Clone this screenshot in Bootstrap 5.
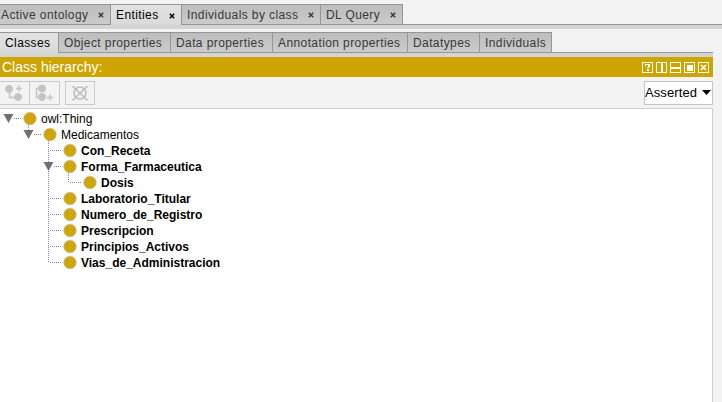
<!DOCTYPE html>
<html lang="en">
<head>
<meta charset="utf-8">
<title>Class hierarchy</title>
<link href="https://cdn.jsdelivr.net/npm/bootstrap@5.3.0/dist/css/bootstrap.min.css" rel="stylesheet">
<style>
body{font:12px/16px "Liberation Sans",Arial,sans-serif;background:#f3f3f3;color:#000;height:402px;overflow:hidden}
.tabbar{height:21px;border-bottom:1px solid #969696}
.tabbar .nav-link{height:21px;padding:0 0 0 5px;border:0 solid #969696;border-width:1px 1px 1px 0;border-radius:0;background:linear-gradient(#bdbdbd,#cbcbcb);color:#383838;font-size:12px;line-height:20px;letter-spacing:.4px;white-space:nowrap}
.tabbar .nav-link.active{background:linear-gradient(#e2e2e2,#dadada);color:#000;border-bottom:0}
.tabbar .nav-link svg{width:6px;height:6px;margin-top:1px}
.tabbar .closable{display:flex;align-items:center;justify-content:space-between;padding-right:6px}
.tabbar .first-tab{padding-left:1px}
.strip{height:4px;background:#d4d4d4}
.pane{width:713px;padding-top:3px}
.pane-head{height:20px;background:#cea500;color:#fff;font-size:14px;line-height:20px;padding-left:2px}
.tools{height:31px}
.tool{width:30px;height:24px;border:1px solid #c9c9c9;border-radius:0;background:#f3f3f3}
.tool-del{margin-left:5px}
.mode{width:69px;height:24px;border:1px solid #c5c5c5;border-radius:0;background:#fff;color:#000;font-size:13px;line-height:20px;letter-spacing:.1px}
.mode svg{margin-right:1px}
.tree{height:294px;background:#fff;border:solid #cfcfcf;border-width:1px 1px 0 0}
.tree-labels{padding-top:2px}
.tree-labels li{height:16px;line-height:16px}
.l0{padding-left:41px}.l1{padding-left:61px}.l2{padding-left:81px}.l3{padding-left:101px}
.w-a{width:111px}.w-b{width:71px}.w-c{width:139px}.w-d{width:82px}
.v-a{width:59px}.v-b{width:112px}.v-c{width:102px}.v-d{width:135px}.v-e{width:72px}.v-f{width:72px}
</style>
<script src="https://cdn.jsdelivr.net/npm/bootstrap@5.3.0/dist/js/bootstrap.bundle.min.js"></script>
</head>
<body>
<svg width="0" height="0" class="d-none"><symbol id="x" viewBox="0 0 6 6"><path d="M.8.8 5.2 5.2M5.2.8.8 5.2" stroke="currentColor" stroke-width="1.4"/></symbol></svg>
<nav class="tabbar nav flex-nowrap mt-1">
  <a class="nav-link closable first-tab w-a"><span>Active ontology</span><svg><use href="#x"/></svg></a>
  <a class="nav-link closable active w-b"><span>Entities</span><svg><use href="#x"/></svg></a>
  <a class="nav-link closable w-c"><span>Individuals by class</span><svg><use href="#x"/></svg></a>
  <a class="nav-link closable w-d"><span>DL Query</span><svg><use href="#x"/></svg></a>
</nav>
<div class="strip"></div>
<main class="pane">
  <nav class="tabbar nav flex-nowrap">
    <a class="nav-link active v-a">Classes</a>
    <a class="nav-link v-b">Object properties</a>
    <a class="nav-link v-c">Data properties</a>
    <a class="nav-link v-d">Annotation properties</a>
    <a class="nav-link v-e">Datatypes</a>
    <a class="nav-link v-f">Individuals</a>
  </nav>
  <div class="strip"></div>
  <header class="pane-head d-flex justify-content-between align-items-center">
    <span>Class hierarchy:</span>
    <svg width="71" height="20" fill="none" stroke="#fff" shape-rendering="crispEdges">
      <path d="M.5 5.5h10v10H.5zM14.5 5.5h10v10h-10zM28.5 5.5h10v10h-10zM42.5 5.5h10v10h-10zM56.5 5.5h10v10h-10z"/>
      <path d="M20 6v9M29 11h9" stroke-width="2"/>
      <path d="M45 8h5v5h-5z" fill="#fff"/>
      <path d="M59 8l5 5m0-5-5 5" stroke-width="1.600" shape-rendering="auto"/>
      <path d="M3 7h5v1H3zM3 8h1v1H3zM6 8h2v2H6zM5 10h2v1H5zM5 12h2v2H5z" fill="#fff" stroke="none"/>
    </svg>
  </header>
  <div class="tools d-flex align-items-center justify-content-between">
    <div class="d-flex">
      <button class="tool btn p-0 d-flex border-start-0" aria-label="Add subclass"><svg width="28" height="22" fill="#c4c4c4" stroke="#c4c4c4"><circle cx="9" cy="7" r="3.500"/><circle cx="18" cy="15" r="3.500"/><path d="M9.500 10v5.500H15M16 6.500h6M19 3.500v6" fill="none" stroke-width="1.500"/></svg></button>
      <button class="tool btn p-0 d-flex border-start-0" aria-label="Add sibling class"><svg width="28" height="22" fill="#c4c4c4" stroke="#c4c4c4"><circle cx="12" cy="6.500" r="3.500"/><circle cx="12" cy="15" r="3.500"/><path d="M9 6.500H6.500v9H9M17 15.500h6M20 12.500v6" fill="none" stroke-width="1.500"/></svg></button>
      <button class="tool tool-del btn p-0 d-flex" aria-label="Delete class"><svg width="28" height="22" fill="none" stroke="#bdbdbd" stroke-width="1.600"><circle cx="14" cy="11" r="6"/><path d="M6.500 4l15 14.500M21.500 4l-15 14.500"/></svg></button>
    </div>
    <button class="mode btn p-0 d-flex align-items-center"><span>Asserted</span><svg class="ms-auto" width="9" height="5"><path d="M0 0h9L4.500 5z"/></svg></button>
  </div>
  <section class="tree position-relative">
    <svg class="position-absolute top-0 start-0" width="120" height="170">
      <g fill="none" stroke="#888" stroke-dasharray="1 1" shape-rendering="crispEdges">
        <path d="M14 9.500h7M34 25.500h7M28.500 16v5M48.500 32v122M50 41.500h11M54 57.500h7M68.500 64v10M70 73.500h11M50 89.500h11M50 105.500h11M50 121.500h11M50 137.500h11M50 153.500h11"/>
      </g>
      <g fill="#707070"><path d="M3.500 5h10l-5 9zM23.500 21h10l-5 9zM43.500 53h10l-5 9z"/></g>
      <g fill="#cea50b" stroke="#cfc49b" stroke-width=".8"><circle cx="30" cy="9.500" r="6.300"/><circle cx="50" cy="25.500" r="6.300"/><circle cx="70" cy="41.500" r="6.300"/><circle cx="70" cy="57.500" r="6.300"/><circle cx="90" cy="73.500" r="6.300"/><circle cx="70" cy="89.500" r="6.300"/><circle cx="70" cy="105.500" r="6.300"/><circle cx="70" cy="121.500" r="6.300"/><circle cx="70" cy="137.500" r="6.300"/><circle cx="70" cy="153.500" r="6.300"/></g>
    </svg>
    <ul class="tree-labels list-unstyled mb-0">
      <li class="l0">owl:Thing</li>
      <li class="l1">Medicamentos</li>
      <li class="l2 fw-bold">Con_Receta</li>
      <li class="l2 fw-bold">Forma_Farmaceutica</li>
      <li class="l3 fw-bold">Dosis</li>
      <li class="l2 fw-bold">Laboratorio_Titular</li>
      <li class="l2 fw-bold">Numero_de_Registro</li>
      <li class="l2 fw-bold">Prescripcion</li>
      <li class="l2 fw-bold">Principios_Activos</li>
      <li class="l2 fw-bold">Vias_de_Administracion</li>
    </ul>
  </section>
</main>
</body>
</html>
